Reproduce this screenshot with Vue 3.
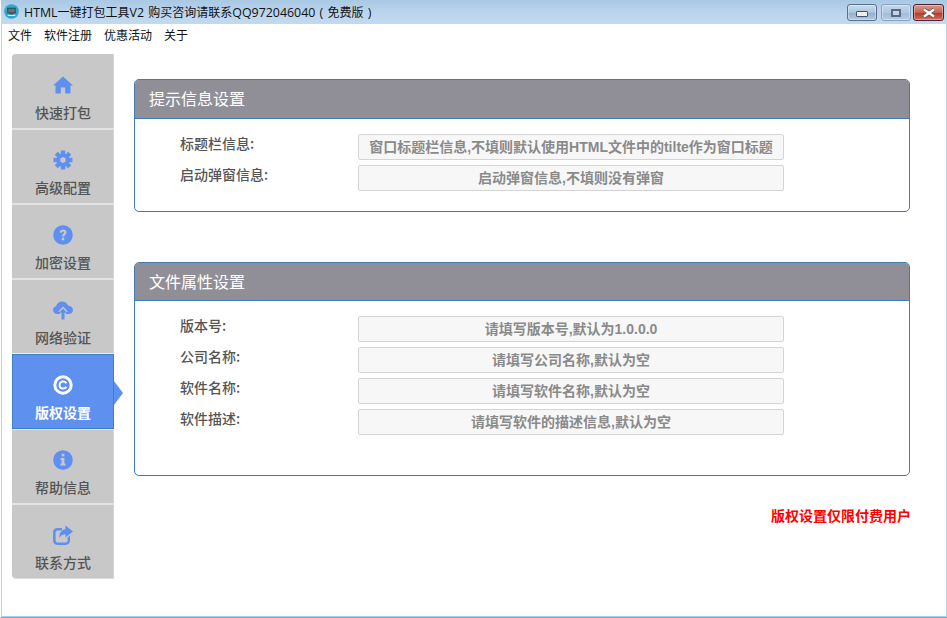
<script setup>
const nav = [
  { label: '快速打包', icon: 'home', cls: 'i-first' },
  { label: '高级配置', icon: 'gear' },
  { label: '加密设置', icon: 'help' },
  { label: '网络验证', icon: 'cloud' },
  { label: '版权设置', icon: 'copy', cls: 'active' },
  { label: '帮助信息', icon: 'info', cls: 'i-after' },
  { label: '联系方式', icon: 'share', cls: 'i-last' }
]
const gearTeeth = [0, 45, 90, 135]
const groups = [
  {
    title: '提示信息设置',
    cls: 'card-a',
    rows: [
      ['标题栏信息:', '窗口标题栏信息,不填则默认使用HTML文件中的tilte作为窗口标题'],
      ['启动弹窗信息:', '启动弹窗信息,不填则没有弹窗']
    ]
  },
  {
    title: '文件属性设置',
    cls: 'card-b',
    rows: [
      ['版本号:', '请填写版本号,默认为1.0.0.0'],
      ['公司名称:', '请填写公司名称,默认为空'],
      ['软件名称:', '请填写软件名称,默认为空'],
      ['软件描述:', '请填写软件的描述信息,默认为空']
    ]
  }
]
</script>

<template>
  <div class="window">
    <header class="titlebar">
      <svg class="appicon" viewBox="0 0 16 16">
        <circle cx="8" cy="8" r="7.8" fill="#2fa9c9" />
        <rect x="3.5" y="4" width="9" height="6" fill="#33424e" />
        <rect x="4.5" y="5" width="7" height="4" fill="#5d7482" />
        <rect x="6" y="10" width="4" height="1.5" fill="#33424e" />
        <rect x="4" y="11.5" width="8" height="1.2" fill="#f3f7f8" />
      </svg>
      <span class="apptitle"><span class="lat">HTML</span>一键打包工具<span class="lat">V2 </span>购买咨询请联系<span class="lat">QQ972046040 ( </span>免费版<span class="lat"> )</span></span>
      <div class="winbtns">
        <div class="wb wb-min"><i></i></div>
        <div class="wb wb-max"><i></i></div>
        <div class="wb wb-close">
          <svg viewBox="0 0 14 10" width="14" height="10">
            <path d="M2 1.5 L12 8.5 M12 1.5 L2 8.5" stroke="#4a4f55" stroke-width="3.6" />
            <path d="M2 1.5 L12 8.5 M12 1.5 L2 8.5" stroke="#fff" stroke-width="2.4" />
          </svg>
        </div>
      </div>
    </header>
    <nav class="menubar">
      <span>文件</span><span>软件注册</span><span>优惠活动</span><span>关于</span>
    </nav>
    <div class="body">
      <aside class="side">
        <div v-for="n in nav" :key="n.label" class="item" :class="n.cls">
          <svg class="ico" viewBox="0 0 20 20">
            <template v-if="n.icon === 'home'">
              <path d="M10 1.5 L20 10.5 L17.5 10.5 L17.5 18.5 L12.2 18.5 L12.2 12.5 L7.8 12.5 L7.8 18.5 L2.5 18.5 L2.5 10.5 L0 10.5 Z" />
            </template>
            <template v-else-if="n.icon === 'gear'">
              <g fill="currentColor">
                <rect v-for="a in gearTeeth" :key="a" x="7.8" y="0.5" width="4.4" height="19" :transform="`rotate(${a} 10 10)`" />
              </g>
              <circle cx="10" cy="10" r="6.6" />
              <circle cx="10" cy="10" r="2.8" fill="#c8c8c8" />
            </template>
            <template v-else-if="n.icon === 'help'">
              <circle cx="10" cy="10" r="9.8" />
              <path d="M6.6 7.6 C6.8 5.3 8.3 4.5 10.1 4.5 C12 4.5 13.5 5.6 13.5 7.4 C13.5 9.6 11.2 9.7 11.2 11.6 L8.9 11.6 C8.9 8.8 11.1 8.7 11.1 7.5 C11.1 6.9 10.7 6.6 10 6.6 C9.3 6.6 8.9 7 8.8 7.8 Z" fill="#c8c8c8" />
              <rect x="8.8" y="12.8" width="2.5" height="2.5" fill="#c8c8c8" />
            </template>
            <template v-else-if="n.icon === 'cloud'">
              <path d="M4.5 14 C1.8 14 0 12.3 0 10 C0 8 1.4 6.5 3.2 6.2 C3.8 3.4 6.2 1.5 9.2 1.5 C12 1.5 14.3 3.2 15.1 5.6 C17.9 5.8 20 7.7 20 10.2 C20 12.4 18.2 14 15.8 14 L13 14 L13 11.8 L15 11.8 L10 6.5 L5 11.8 L7 11.8 L7 14 Z" />
              <path d="M10 8.5 L14 12.8 L11.5 12.8 L11.5 19.5 L8.5 19.5 L8.5 12.8 L6 12.8 Z" />
            </template>
            <template v-else-if="n.icon === 'copy'">
              <circle cx="10" cy="10" r="8.2" fill="none" stroke="currentColor" stroke-width="3" />
              <path d="M13.4 8.2 C12.6 6.8 11.4 6.4 10 6.4 C8 6.4 6.6 8 6.6 10 C6.6 12 8 13.6 10 13.6 C11.4 13.6 12.6 13.2 13.4 11.8" fill="none" stroke="currentColor" stroke-width="2" />
            </template>
            <template v-else-if="n.icon === 'info'">
              <circle cx="10" cy="10" r="9.8" />
              <rect x="8.6" y="3.8" width="2.8" height="2.6" fill="#c8c8c8" />
              <path d="M7.6 8 L11.4 8 L11.4 13.6 L12.6 13.6 L12.6 15.6 L7.4 15.6 L7.4 13.6 L8.6 13.6 L8.6 10 L7.6 10 Z" fill="#c8c8c8" />
            </template>
            <template v-else>
              <path d="M9 3 L9 5.4 L4.6 5.4 C3.4 5.4 2.6 6.2 2.6 7.4 L2.6 15.4 C2.6 16.6 3.4 17.4 4.6 17.4 L12.6 17.4 C13.8 17.4 14.6 16.6 14.6 15.4 L14.6 12.5 L17 10.4 L17 15.6 C17 18.2 15.2 20 12.6 20 L4.4 20 C1.8 20 0 18.2 0 15.6 L0 7.4 C0 4.8 1.8 3 4.4 3 Z" />
              <path d="M12.4 0.5 L20 6.6 L12.4 12.6 L12.4 9.2 C9.6 9.2 7.6 10.4 6.2 13 C6.2 8.4 8.4 4.6 12.4 4.2 Z" />
            </template>
          </svg>
          <span class="navlabel">{{ n.label }}</span>
        </div>
      </aside>
      <main class="content">
        <section v-for="g in groups" :key="g.title" class="card" :class="g.cls">
          <h2 class="cardhead">{{ g.title }}</h2>
          <div class="rows">
            <div v-for="r in g.rows" :key="r[0]" class="row">
              <span class="lab">{{ r[0] }}</span>
              <div class="field">{{ r[1] }}</div>
            </div>
          </div>
        </section>
        <p class="notice">版权设置仅限付费用户</p>
      </main>
    </div>
  </div>
</template>

<style scoped>
.window {
  width: 947px;
  height: 618px;
  box-sizing: border-box;
  background: #fff;
  border-left: 1px solid #fff;
  border-bottom: 1px solid #3dbfdf;
  box-shadow: inset 1px 0 #b9d3ea, inset -1px 0 #b9d3ea, inset 0 -1px #a9cfe8;
  display: flex;
  flex-direction: column;
  font-family: "Noto Sans CJK SC", "Noto Sans", sans-serif;
  overflow: hidden;
}
.titlebar {
  height: 24px;
  flex: none;
  margin-left: -1px;
  padding: 0 3px 0 4px;
  background: linear-gradient(#a9c8e3, #bcd5ec 55%, #c2daef);
  display: flex;
  align-items: center;
  color: #111;
}
.appicon { width: 15px; height: 15px; flex: none; margin-top: -1px; }
.apptitle {
  margin-left: 5px;
  font-size: 12px;
  font-family: "Open Sans", "Noto Sans CJK SC", sans-serif;
  white-space: nowrap;
  word-spacing: 1px;
}
.lat { font-size: 12.4px; }
.winbtns {
  margin-left: auto;
  display: flex;
  gap: 3px;
  align-self: flex-start;
  padding-top: 4px;
}
.wb {
  width: 30px;
  height: 17px;
  box-sizing: border-box;
  border: 1px solid #5b6f8c;
  border-radius: 3px;
  display: flex;
  align-items: center;
  justify-content: center;
  background: linear-gradient(#c9dced, #a9c5de 50%, #8eb0d0 55%, #b3cde3);
  box-shadow: inset 0 0 0 1px rgba(255, 255, 255, 0.35);
}
.wb-min { margin-right: 1px; }
.wb-min i {
  width: 10px;
  height: 4px;
  margin-top: 3px;
  background: #eee;
  border: 1px solid #44526a;
  border-radius: 1px;
}
.wb-max {
  border-color: #8aa3c2;
  background: linear-gradient(#c3d7ea, #afc9e1 50%, #9fbcd8 55%, #b5cee5);
}
.wb-max i {
  width: 10px;
  height: 8px;
  box-sizing: border-box;
  background: #c4d6e6;
  border: 2px solid #5a6a80;
}
.wb-close {
  width: 31px;
  margin-left: -1px;
  border-color: #4a2230;
  background: linear-gradient(#dd9a8e, #c9604f 50%, #b23c2c 55%, #cf7060);
}
.menubar {
  height: 20px;
  flex: none;
  padding-left: 7px;
  display: flex;
  gap: 12px;
  align-items: center;
  font-size: 12px;
  color: #111;
}
.body {
  flex: 1;
  display: flex;
  padding: 10px 0 0 11px;
}
.side {
  width: 102px;
  height: 524px;
  flex: none;
  display: flex;
  flex-direction: column;
  background: #eee;
  box-shadow: 0 1px #dcdcdc;
  border-radius: 4px 0 0 4px;
}
.item {
  height: 75px;
  flex: none;
  box-sizing: border-box;
  background: #c8c8c8;
  border-top: 2px solid #e3e3e3;
  box-shadow: inset -1px 0 #d6d6d6;
  color: #5f8ff0;
  display: flex;
  flex-direction: column;
  align-items: center;
  padding-top: 20px;
  position: relative;
}
.item.i-first {
  height: 74px;
  border-top: 0;
  padding-top: 21px;
  border-top-left-radius: 4px;
}
.item.i-after {
  height: 74px;
  border-top-width: 1px;
}
.item.i-last { border-bottom-left-radius: 4px; }
.ico {
  width: 20px;
  height: 20px;
  fill: currentColor;
  flex: none;
}
.navlabel {
  margin-top: 7px;
  font-size: 14px;
  line-height: 20px;
  font-weight: 500;
  color: #555;
}
.item.active {
  margin-top: 1px;
  background: #5e90ef;
  border: 1px solid #3d80c4;
  box-shadow: none;
  color: #fff;
}
.item.active .navlabel { color: #fff; font-weight: 700; }
.item.active::after {
  content: "";
  position: absolute;
  right: -10px;
  top: 26px;
  border-style: solid;
  border-width: 12px 0 12px 9px;
  border-color: transparent transparent transparent #5e90ef;
}
.content {
  width: 776px;
  margin-left: 20px;
  padding-top: 25px;
}
.card {
  box-sizing: border-box;
  border: 1px solid #3f7cb5;
  border-radius: 5px;
  overflow: hidden;
}
.card-a { height: 133px; }
.card-b { height: 214px; margin-top: 50px; }
.cardhead {
  margin: 0;
  height: 39px;
  box-sizing: border-box;
  background: #908f98;
  border-bottom: 1px solid #3f7cb5;
  color: #fff;
  font-size: 16px;
  font-weight: 400;
  line-height: 36px;
  padding-left: 14px;
}
.card-b .cardhead { height: 38px; }
.rows {
  display: flex;
  flex-direction: column;
  gap: 5px;
  padding-top: 15px;
}
.row {
  display: flex;
  height: 26px;
  padding-left: 45px;
}
.lab {
  width: 178px;
  flex: none;
  margin-top: -1px;
  font-size: 14px;
  font-weight: 500;
  color: #555;
  line-height: 20px;
}
.field {
  width: 426px;
  height: 26px;
  box-sizing: border-box;
  background: #f7f7f7;
  border: 1px solid #d4d4d4;
  border-radius: 2px;
  text-align: center;
  font-family: "Liberation Sans", "Noto Sans CJK SC", sans-serif;
  font-size: 14px;
  font-weight: 700;
  color: #8a8a8a;
  line-height: 24px;
  white-space: nowrap;
  overflow: hidden;
}
.notice {
  margin: 29px -1px 0 0;
  text-align: right;
  color: #f00;
  font-size: 14px;
  line-height: 20px;
  font-weight: 700;
}
</style>

<style>
html, body { margin: 0; padding: 0; }
</style>
